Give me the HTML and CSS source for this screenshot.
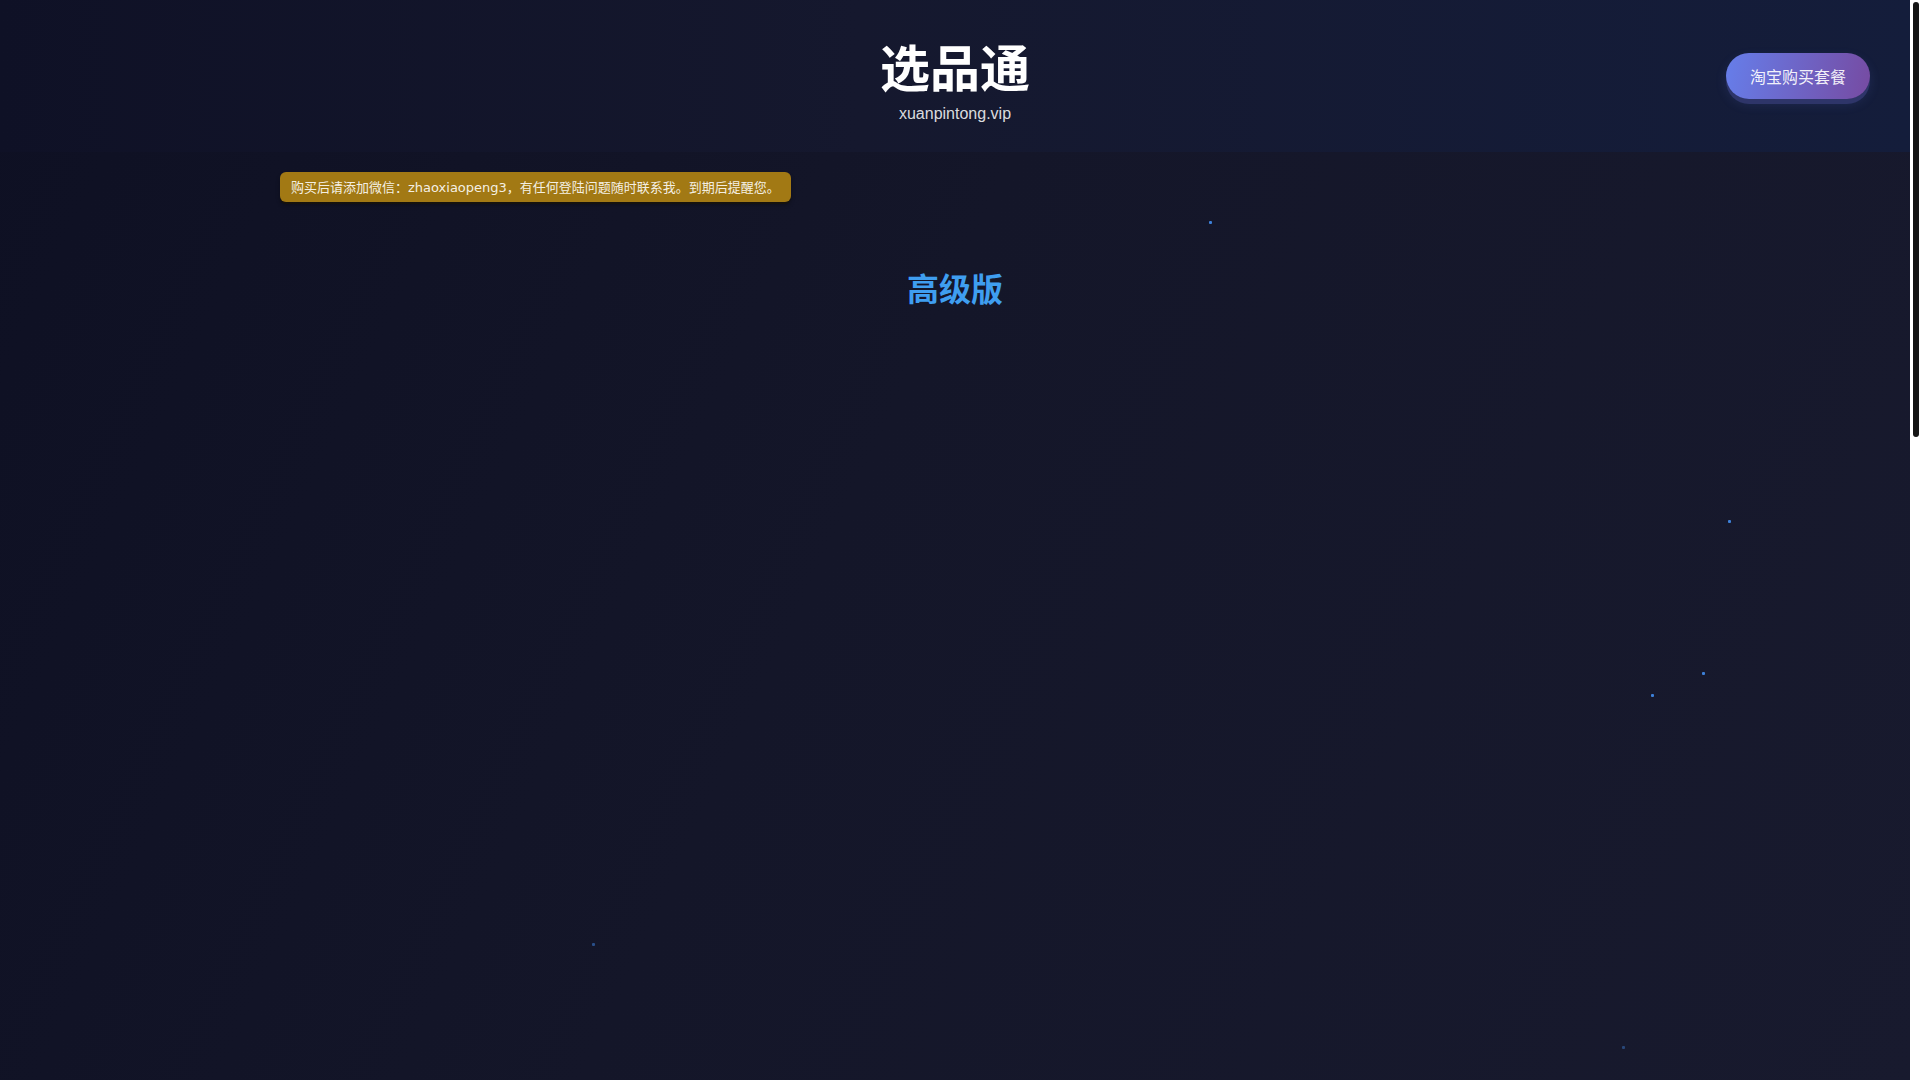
FILE: index.html
```html
<!DOCTYPE html>
<html lang="zh-CN">
<head>
<meta charset="utf-8">
<title>选品通 - 套餐购买</title>
<link rel="stylesheet" href="styles.css">
</head>
<body>
<div class="app">
  <div class="page">
    <div class="page-inner">
      <div class="stars" aria-hidden="true">
        <span class="star star-1"></span>
        <span class="star star-2"></span>
        <span class="star star-3"></span>
        <span class="star star-4"></span>
        <span class="star star-5"></span>
        <span class="star star-6"></span>
      </div>
      <header class="site-header">
        <div class="header-side"></div>
        <div class="brand">
          <h1 class="brand-title">选品通</h1>
          <div class="brand-domain">xuanpintong.vip</div>
        </div>
        <div class="header-side header-actions">
          <a class="buy-btn" href="#">淘宝购买套餐</a>
        </div>
      </header>
      <main class="container">
        <div class="notice">购买后请添加微信：<span class="latin">zhaoxiaopeng3</span>，有任何登陆问题随时联系我。到期后提醒您。</div>
        <h2 class="plan-title">高级版</h2>
        <section class="plans"></section>
      </main>
    </div>
  </div>
  <div class="scrollbar" aria-hidden="true">
    <div class="scrollbar-thumb"></div>
  </div>
</div>
</body>
</html>
```
FILE: styles.css
```css
html,
body {
  margin: 0;
  height: 100%;
  overflow: hidden;
  background: #13152a;
}
body {
  font-family: "Liberation Sans", "Noto Sans CJK SC", sans-serif;
  color: #ffffff;
}
.app {
  display: flex;
  height: 100vh;
}
.page {
  flex: 1;
  min-width: 0;
  overflow: hidden;
  background: linear-gradient(115deg, #0e1023 0%, #141629 45%, #181a2e 100%);
}
.scrollbar {
  width: 10px;
  flex: none;
  background: #ffffff;
  padding: 2px 1px 0 3px;
  box-sizing: border-box;
}
.scrollbar-thumb {
  height: 435px;
  background: #141414;
  border-radius: 3px;
}
.page-inner {
  position: relative;
  min-height: 2680px;
}
.stars {
  position: absolute;
  inset: 0;
  pointer-events: none;
}
.star {
  position: absolute;
  width: 3px;
  height: 3px;
  border-radius: 1px;
  background: #3d80d8;
}
.star-1 { left: 1209px; top: 221px; }
.star-2 { left: 1728px; top: 520px; }
.star-3 { left: 1702px; top: 672px; }
.star-4 { left: 1651px; top: 694px; }
.star-5 { left: 592px; top: 943px; opacity: 0.55; }
.star-6 { left: 1622px; top: 1046px; opacity: 0.45; }

.site-header {
  position: relative;
  display: grid;
  grid-template-columns: 1fr auto 1fr;
  padding: 35px 40px 26px;
  background: linear-gradient(90deg, #0f1126 0%, #15182e 45%, #141d3b 100%);
}
.brand {
  text-align: center;
}
.brand-title {
  margin: 0;
  font-size: 50px;
  line-height: 60px;
  font-weight: 700;
  color: #ffffff;
  font-family: "Noto Sans CJK SC", sans-serif;
}
.brand-domain {
  margin-top: 7px;
  font-size: 16px;
  line-height: 24px;
  color: rgba(255, 255, 255, 0.86);
}
.header-actions {
  display: flex;
  justify-content: flex-end;
  align-self: start;
  margin-top: 18px;
}
.buy-btn {
  display: inline-block;
  padding: 12px 24px;
  font-size: 16px;
  line-height: 22px;
  font-family: "Noto Sans CJK SC", sans-serif;
  color: rgba(255, 255, 255, 0.92);
  text-decoration: none;
  border-radius: 23px;
  background: linear-gradient(100deg, #667eea 0%, #764ba2 100%);
  box-shadow: 0 5px 0 #2e3569, 0 5px 12px rgba(102, 126, 234, 0.15);
}
.container {
  position: relative;
  max-width: 1350px;
  margin: 0 auto;
  padding-top: 20px;
}
.notice {
  display: inline-block;
  padding: 6px 11px;
  font-size: 13px;
  line-height: 17px;
  font-family: "Noto Sans CJK SC", sans-serif;
  color: rgba(255, 255, 255, 0.9);
  background: #a27914;
  border-radius: 6px;
  box-shadow: 0 2px 0 rgba(30, 22, 0, 0.5), 0 3px 4px rgba(0, 0, 0, 0.3);
}
.notice .latin {
  font-family: "DejaVu Sans", sans-serif;
}
.plan-title {
  margin: 66px 0 0;
  text-align: center;
  font-size: 32px;
  line-height: 38px;
  font-weight: 700;
  color: #3f9ef0;
  font-family: "Noto Sans CJK SC", sans-serif;
}
```
